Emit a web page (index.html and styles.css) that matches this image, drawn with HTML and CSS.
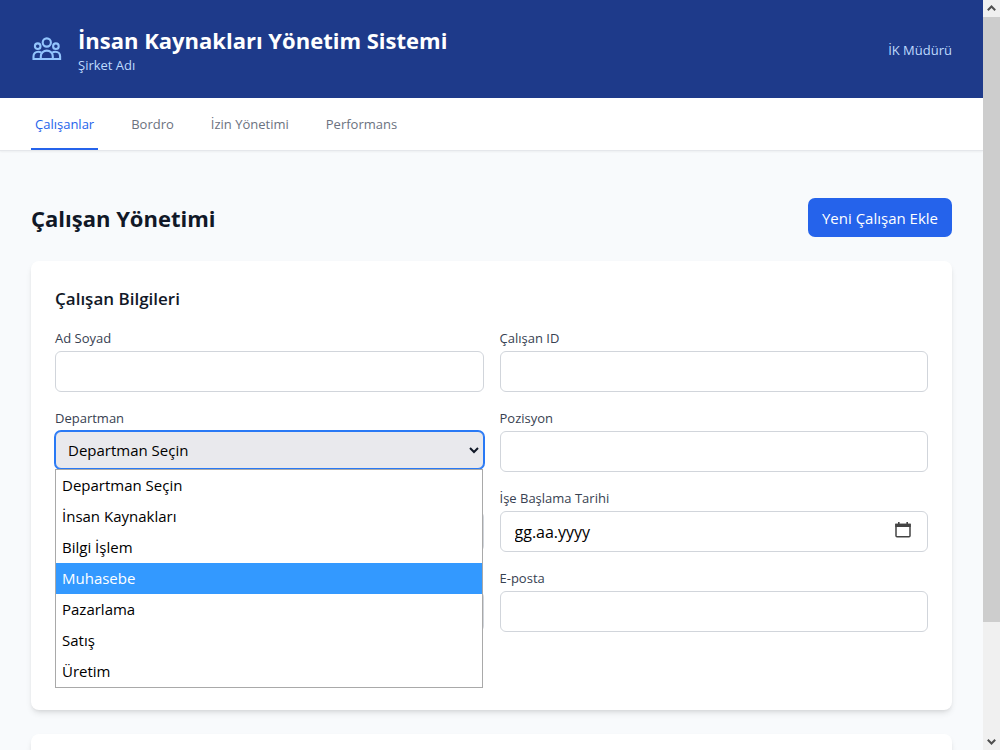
FILE: index.html
```html
<!DOCTYPE html>
<html lang="tr">
<head>
  <meta charset="UTF-8">
  <meta name="viewport" content="width=device-width, initial-scale=1.0">
  <title>İnsan Kaynakları Yönetim Sistemi</title>
  <link rel="stylesheet" href="styles.css">
</head>
<body>
  <div class="page">
    <header class="header">
      <div class="brand">
        <svg class="logo" viewBox="0 0 31 31" fill="none" stroke="currentColor" stroke-width="2.1">
          <circle cx="15.8" cy="7.5" r="4.1"/>
          <circle cx="6.7" cy="11.2" r="2.8"/>
          <circle cx="24.9" cy="11.2" r="2.8"/>
          <path d="M9.8 24v-2.4a6 6 0 0 1 12 0V24"/>
          <path d="M10.4 17.6c-.9-.5-1.9-.8-3.2-.8-2.8 0-4.7 1.8-4.7 4.5V24h26.6v-2.7c0-2.7-1.9-4.5-4.7-4.5-1.3 0-2.3.3-3.2.8"/>
        </svg>
        <div>
          <h1>İnsan Kaynakları Yönetim Sistemi</h1>
          <p class="company">Şirket Adı</p>
        </div>
      </div>
      <span class="user">İK Müdürü</span>
    </header>

    <nav class="tabs">
      <a href="#" class="tab active">Çalışanlar</a>
      <a href="#" class="tab">Bordro</a>
      <a href="#" class="tab">İzin Yönetimi</a>
      <a href="#" class="tab">Performans</a>
    </nav>

    <main>
      <div class="title-row">
        <h2>Çalışan Yönetimi</h2>
        <button type="button" class="btn">Yeni Çalışan Ekle</button>
      </div>

      <section class="card form-card">
        <h3>Çalışan Bilgileri</h3>
        <form class="form-grid">
          <div class="field">
            <label for="name">Ad Soyad</label>
            <input type="text" id="name">
          </div>
          <div class="field">
            <label for="employeeId">Çalışan ID</label>
            <input type="text" id="employeeId">
          </div>
          <div class="field">
            <label for="department">Departman</label>
            <!-- select with its list open -->
            <div class="select-box">
              <select id="department">
                <option>Departman Seçin</option>
                <option>İnsan Kaynakları</option>
                <option>Bilgi İşlem</option>
                <option>Muhasebe</option>
                <option>Pazarlama</option>
                <option>Satış</option>
                <option>Üretim</option>
              </select>
              <svg class="chevron" viewBox="0 0 10 10" fill="none" stroke="currentColor" stroke-width="2"><path d="M1 3l4 4 4-4"/></svg>
              <ul class="menu">
                <li>Departman Seçin</li>
                <li>İnsan Kaynakları</li>
                <li>Bilgi İşlem</li>
                <li class="selected">Muhasebe</li>
                <li>Pazarlama</li>
                <li>Satış</li>
                <li>Üretim</li>
              </ul>
            </div>
          </div>
          <div class="field">
            <label for="position">Pozisyon</label>
            <input type="text" id="position">
          </div>
          <div class="field">
            <input type="text" id="salary" aria-label="Maaş">
          </div>
          <div class="field">
            <label for="startDate">İşe Başlama Tarihi</label>
            <div class="date-box">
              <input type="text" id="startDate" placeholder="gg.aa.yyyy">
              <svg class="calendar" viewBox="0 0 18 18"><path fill="none" stroke="currentColor" stroke-width="1.5" d="M2 3.5h14v11.2a1 1 0 0 1-1 1H3a1 1 0 0 1-1-1z"/><path fill="currentColor" d="M1.3 2.8h15.4V6H1.3zM4 1h1.6v2H4zM12.4 1H14v2h-1.6z"/></svg>
            </div>
          </div>
          <div class="field">
            <input type="text" id="phone" aria-label="Telefon">
          </div>
          <div class="field">
            <label for="email">E-posta</label>
            <input type="email" id="email">
          </div>
        </form>
      </section>

      <section class="card"></section>
    </main>
  </div>

  <div class="scrollbar">
    <svg class="arrow" viewBox="0 0 17 17" fill="none" stroke="currentColor" stroke-width="2"><path d="M4.8 10.2L8.5 6.5l3.7 3.7"/></svg>
    <div class="track"><div class="thumb"></div></div>
    <svg class="arrow" viewBox="0 0 17 17" fill="none" stroke="currentColor" stroke-width="2"><path d="M4.8 6.8l3.7 3.7 3.7-3.7"/></svg>
  </div>
</body>
</html>
```
FILE: styles.css
```css
* {
  box-sizing: border-box;
}
body {
  display: flex;
  height: 100vh;
  margin: 0;
  overflow: hidden;
  background: #f8fafc;
  color: #111827;
  font-family: "Open Sans", "Noto Sans", sans-serif;
  font-size: 15px;
}
h1, h2, h3, p, ul {
  margin: 0;
  padding: 0;
}
.page {
  flex: 1;
  overflow: hidden;
}

/* Header */
.header {
  display: flex;
  align-items: center;
  justify-content: space-between;
  padding: 25px 31px 23px;
  background: #1e3a8a;
  color: #fff;
}
.brand {
  display: flex;
  align-items: center;
  gap: 16px;
}
.logo {
  width: 31px;
  height: 31px;
  color: #93c5fd;
}
h1 {
  font-size: 22px;
  line-height: 31px;
}
.company {
  color: #bfdbfe;
  font-size: 13px;
  line-height: 19px;
}
.user {
  color: #bfdbfe;
  font-size: 13px;
}

/* Tabs */
.tabs {
  display: flex;
  gap: 29px;
  padding: 0 31px;
  background: #fff;
  border-bottom: 1px solid #e5e7eb;
  box-shadow: 0 1px 2px rgba(0, 0, 0, 0.05);
}
.tab {
  padding: 17px 4px 14px;
  border-bottom: 2px solid transparent;
  color: #6b7280;
  font-size: 13px;
  line-height: 19px;
  text-decoration: none;
}
.tab.active {
  border-color: #2563eb;
  color: #2563eb;
}

/* Content */
main {
  padding: 47px 31px;
}
.title-row {
  display: flex;
  align-items: center;
  justify-content: space-between;
  margin-bottom: 24px;
}
h2 {
  font-size: 22px;
  line-height: 32px;
}
.btn {
  height: 39px;
  padding: 0 14px;
  border: none;
  border-radius: 7px;
  background: #2563eb;
  color: #fff;
  font-family: inherit;
  font-size: 15px;
}
.card {
  min-height: 100px;
  margin-bottom: 24px;
  padding: 24px;
  border-radius: 8px;
  background: #fff;
  box-shadow: 0 4px 6px -1px rgba(0, 0, 0, 0.1), 0 2px 4px -2px rgba(0, 0, 0, 0.1);
}
/* room for the open list */
.form-card {
  padding-bottom: 78px;
}
h3 {
  margin-bottom: 17px;
  font-size: 17px;
  font-weight: 600;
  line-height: 27px;
}

/* Form */
.form-grid {
  display: grid;
  grid-template-columns: 1fr 1fr;
  gap: 17px 16px;
}
.field {
  display: flex;
  flex-direction: column;
}
.field label {
  margin-bottom: 3px;
  color: #374151;
  font-size: 13px;
  line-height: 19px;
}
.field > input:only-child {
  margin-top: auto;
}
.field input,
.field select {
  display: block;
  width: 100%;
  height: 41px;
  padding: 0 14px;
  border: 1px solid #d1d5db;
  border-radius: 6px;
  background: #fff;
  color: #000;
  font-family: inherit;
  font-size: 15px;
}
.date-box input {
  font-size: 16px;
}
.date-box input::placeholder {
  color: #000;
}
.select-box,
.date-box {
  position: relative;
}
.field select {
  height: 38px;
  padding: 0 12px;
  border-color: #2979f5;
  background: #e9e9ed;
  box-shadow: 0 0 0 1px #2979f5;
  appearance: none;
}
.chevron {
  position: absolute;
  top: 14px;
  right: 5px;
  width: 10px;
  height: 10px;
}
.calendar {
  position: absolute;
  top: 10px;
  right: 16px;
  width: 18px;
  height: 18px;
  color: #444;
}
.menu {
  position: absolute;
  top: 100%;
  left: 0;
  right: 1px;
  z-index: 1;
  border: 1px solid #a9a9a9;
  background: #fff;
  color: #000;
  list-style: none;
}
.menu li {
  padding: 0 6px;
  line-height: 31px;
}
.menu .selected {
  background: #3399ff;
  color: #fff;
}

/* Scrollbar */
.scrollbar {
  display: flex;
  flex-direction: column;
  width: 17px;
  background: #f0f0f0;
}
.arrow {
  width: 17px;
  height: 17px;
  color: #505050;
}
.track {
  flex: 1;
}
.thumb {
  height: 84.5%;
  background: #cdcdcd;
}
```
